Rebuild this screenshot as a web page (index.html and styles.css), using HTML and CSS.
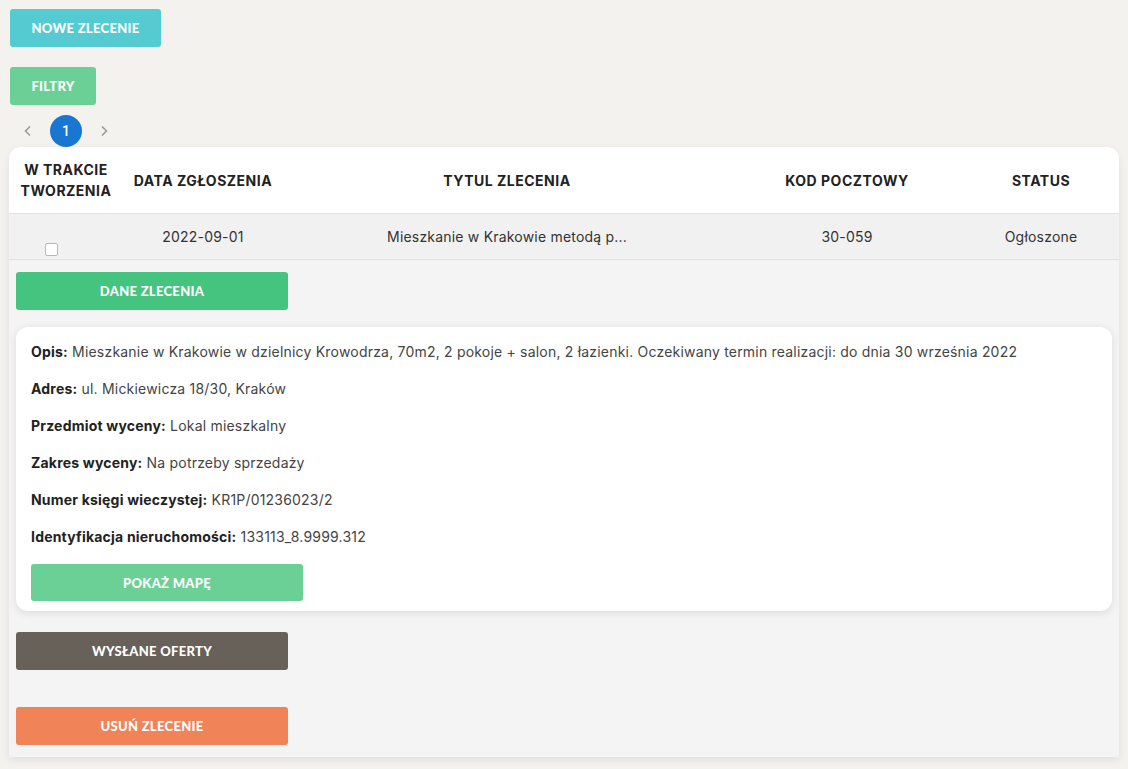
FILE: index.html
```html
<!DOCTYPE html>
<html lang="pl">
<head>
<meta charset="utf-8">
<title>Zlecenia</title>
<link rel="stylesheet" href="styles.css">
</head>
<body>
<div class="page">
  <button class="btn btn-cyan btn-new">NOWE ZLECENIE</button>
  <button class="btn btn-mint btn-filter">FILTRY</button>
  <div class="pager">
    <span class="chev"><svg width="10" height="12" viewBox="0 0 10 12"><path d="M7 1.5 L2.5 6 L7 10.5" fill="none" stroke="#9a9a9a" stroke-width="1.6"/></svg></span>
    <span class="page-num">1</span>
    <span class="chev"><svg width="10" height="12" viewBox="0 0 10 12"><path d="M3 1.5 L7.5 6 L3 10.5" fill="none" stroke="#9a9a9a" stroke-width="1.6"/></svg></span>
  </div>
  <div class="table">
    <div class="thead grid">
      <div class="th">W TRAKCIE<br>TWORZENIA</div>
      <div class="th">DATA ZGŁOSZENIA</div>
      <div class="th">TYTUL ZLECENIA</div>
      <div class="th">KOD POCZTOWY</div>
      <div class="th">STATUS</div>
    </div>
    <div class="trow grid">
      <div class="td td-check"><span class="checkbox"></span></div>
      <div class="td">2022-09-01</div>
      <div class="td">Mieszkanie w Krakowie metodą p...</div>
      <div class="td">30-059</div>
      <div class="td">Ogłoszone</div>
    </div>
    <div class="details">
      <button class="btn btn-green btn-wide">DANE ZLECENIA</button>
      <div class="card">
        <p><b>Opis:</b> Mieszkanie w Krakowie w dzielnicy Krowodrza, 70m2, 2 pokoje + salon, 2 łazienki. Oczekiwany termin realizacji: do dnia 30 września 2022</p>
        <p><b>Adres:</b> ul. Mickiewicza 18/30, Kraków</p>
        <p><b>Przedmiot wyceny:</b> Lokal mieszkalny</p>
        <p><b>Zakres wyceny:</b> Na potrzeby sprzedaży</p>
        <p><b>Numer księgi wieczystej:</b> KR1P/01236023/2</p>
        <p><b>Identyfikacja nieruchomości:</b> 133113_8.9999.312</p>
        <button class="btn btn-mint btn-wide btn-map">POKAŻ MAPĘ</button>
      </div>
      <button class="btn btn-dark btn-wide btn-offers">WYSŁANE OFERTY</button>
      <button class="btn btn-orange btn-wide btn-delete">USUŃ ZLECENIE</button>
    </div>
  </div>
</div>
</body>
</html>
```
FILE: styles.css
```css
* { box-sizing: border-box; }
html, body { margin: 0; padding: 0; }
body {
  background: #f3f2ef;
  font-family: "Inter", "Open Sans", sans-serif;
  color: #333;
  width: 1128px;
  height: 769px;
  overflow: hidden;
}
.page {
  padding: 9px 9px 0 9px;
  display: flex;
  flex-direction: column;
  align-items: flex-start;
}
.btn {
  border: none;
  border-radius: 3px;
  color: #fff;
  font-family: "Lato", sans-serif;
  font-weight: 900;
  font-size: 13px;
  letter-spacing: 0.3px;
  height: 38px;
  display: flex;
  align-items: center;
  justify-content: center;
  padding: 0;
  cursor: pointer;
}
.btn-new { margin-left: 1px; width: 151px; }
.btn-filter { margin-left: 1px; width: 86px; margin-top: 20px; }
.btn-cyan { background: #53cbd0; }
.btn-mint { background: #6bd095; }
.btn-green { background: #45c47f; }
.btn-dark { background: #676159; }
.btn-orange { background: #f08358; }
.btn-wide { width: 272px; }

.pager {
  display: flex;
  align-items: center;
  height: 32px;
  margin-top: 10px;
  margin-left: 14px;
}
.chev { width: 10px; height: 12px; display: flex; }
.page-num {
  width: 32px;
  height: 32px;
  border-radius: 50%;
  background: #1976d2;
  color: #fff;
  font-family: "Roboto", sans-serif;
  font-weight: 500;
  font-size: 14px;
  display: flex;
  align-items: center;
  justify-content: center;
  margin: 0 17px 0 17px;
}

.table {
  width: 1110px;
  background: #f4f4f4;
  border-radius: 12px 12px 0 0;
  box-shadow: 0 3px 8px rgba(0,0,0,0.08);
  overflow: hidden;
}
.grid {
  display: grid;
  grid-template-columns: 114px 160px 448px 232px 156px;
}
.thead {
  background: #fff;
  height: 67px;
  align-items: center;
  border-bottom: 1px solid #e2e2e2;
}
.th {
  text-align: center;
  font-weight: 700;
  font-size: 14px;
  line-height: 21px;
  letter-spacing: 0.5px;
  color: #222;
}
.trow {
  background: #f1f1f1;
  height: 46px;
  border-bottom: 1px solid #e2e2e2;
}
.td {
  text-align: center;
  font-size: 14px;
  color: #333;
  padding-top: 14px;
  white-space: nowrap;
  letter-spacing: 0.2px;
}
.td-check { padding-top: 28px; }
.checkbox {
  display: inline-block;
  width: 13px;
  height: 13px;
  border: 1px solid #b8b8b8;
  border-radius: 2px;
  background: #fff;
  margin-left: -30px;
}
.details {
  padding: 12px 7px 12px 7px;
  display: flex;
  flex-direction: column;
  align-items: flex-start;
}
.card {
  margin-top: 17px;
  width: 1096px;
  background: #fff;
  border-radius: 12px;
  box-shadow: 0 2px 8px rgba(0,0,0,0.1);
  padding: 15px 15px 10px 15px;
}
.card p {
  margin: 0 0 17px 0;
  font-size: 14px;
  line-height: 20px;
  color: #444;
  letter-spacing: 0.2px;
}
.card p b { color: #222; font-weight: 700; }
.btn-map { margin-top: 0; height: 37px; }
.btn-offers { margin-top: 21px; }
.btn-delete { margin-top: 37px; }
```
